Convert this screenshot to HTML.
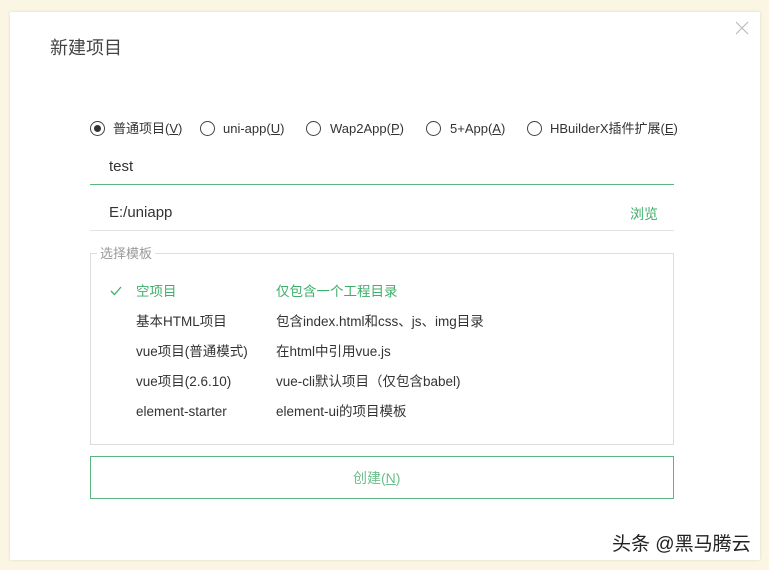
<!DOCTYPE html>
<html><head><meta charset="utf-8"><style>
body{margin:0;width:769px;height:570px;background:#fbf6e4;font-family:"Liberation Sans","Noto Sans CJK SC",sans-serif;position:relative;overflow:hidden;color:#333}
.dlg{position:absolute;left:10px;top:12px;width:750px;height:548px;background:#fff;box-shadow:0 0 3px rgba(0,0,0,.12)}
.a{position:absolute;white-space:nowrap;line-height:20px}
.r{position:absolute;width:13px;height:13px;border:1px solid #444;border-radius:50%;top:121px}
.g{color:#3eae6a}
.t{font-size:13px}
.s{font-size:13.5px}
u{text-decoration:underline}
</style></head><body>
<div class="dlg"></div>
<div class="a" style="left:50px;top:38px;font-size:18px;color:#444">新建项目</div>
<svg class="a" style="left:735px;top:21px" width="14" height="14"><path d="M1 1L13 13M13 1L1 13" stroke="#bbb" stroke-width="1.2"/></svg>
<div class="r" style="left:90px"><div style="position:absolute;left:3px;top:3px;width:7px;height:7px;border-radius:50%;background:#333"></div></div>
<div class="a t" style="left:113px;top:119px">普通项目(<u>V</u>)</div>
<div class="r" style="left:200px"></div>
<div class="a t" style="left:223px;top:119px">uni-app(<u>U</u>)</div>
<div class="r" style="left:306px"></div>
<div class="a t" style="left:330px;top:119px">Wap2App(<u>P</u>)</div>
<div class="r" style="left:426px"></div>
<div class="a t" style="left:450px;top:119px">5+App(<u>A</u>)</div>
<div class="r" style="left:527px"></div>
<div class="a t" style="left:550px;top:119px">HBuilderX插件扩展(<u>E</u>)</div>
<div class="a" style="left:109px;top:157px;font-size:15px">test</div>
<div class="a" style="left:90px;top:184px;width:584px;height:1px;background:#5ab57e"></div>
<div class="a" style="left:109px;top:203px;font-size:15px">E:/uniapp</div>
<div class="a g" style="left:630px;top:204px;font-size:14px">浏览</div>
<div class="a" style="left:90px;top:230px;width:584px;height:1px;background:#e2e2e2"></div>
<div class="a" style="left:90px;top:253px;width:582px;height:190px;border:1px solid #ddd"></div>
<div class="a" style="left:97px;top:244px;font-size:13px;color:#999;background:#fff;padding:0 3px">选择模板</div>
<svg class="a" style="left:110px;top:286px" width="12" height="10"><path d="M1 5L4.5 8.5L11 1" stroke="#3eae6a" stroke-width="1.3" fill="none"/></svg>
<div class="a g s" style="left:136px;top:282px">空项目</div>
<div class="a g s" style="left:276px;top:282px">仅包含一个工程目录</div>
<div class="a s" style="left:136px;top:312px">基本HTML项目</div>
<div class="a s" style="left:276px;top:312px">包含index.html和css、js、img目录</div>
<div class="a s" style="left:136px;top:342px">vue项目(普通模式)</div>
<div class="a s" style="left:276px;top:342px">在html中引用vue.js</div>
<div class="a s" style="left:136px;top:372px">vue项目(2.6.10)</div>
<div class="a s" style="left:276px;top:372px">vue-cli默认项目（仅包含babel)</div>
<div class="a s" style="left:136px;top:402px">element-starter</div>
<div class="a s" style="left:276px;top:402px">element-ui的项目模板</div>
<div class="a" style="left:90px;top:456px;width:582px;height:41px;border:1px solid #5ab57e"></div>
<div class="a" style="left:353px;top:468px;font-size:14px;color:#6cbf8a">创建(<u>N</u>)</div>
<div class="a" style="left:612px;top:535px;font-size:19px;color:#222">头条 @黑马腾云</div>
</body></html>
